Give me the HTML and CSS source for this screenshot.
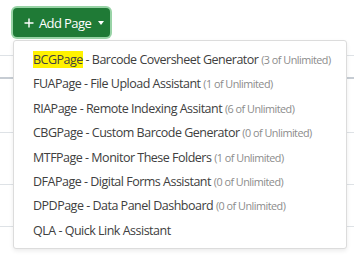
FILE: index.html
```html
<!DOCTYPE html>
<html>
<head>
  <title>Add Page</title>
  <link rel="stylesheet" href="styles.css">
</head>
<body>
  <div class="toolbar">
    <button class="addButton">
      <svg class="plus" width="10" height="10" viewBox="0 0 10 10">
        <path d="M5 0.5V9.5M0.5 5H9.5" stroke="#fff" stroke-width="1.4" fill="none"/>
      </svg>
      <span>Add Page</span>
      <span class="caret"></span>
    </button>
  </div>

  <div class="pageTable">
    <div class="headRow"></div>
    <div class="bodyRow tall"></div>
    <div class="bodyRow tall"></div>
    <div class="bodyRow"></div>
  </div>

  <div class="dropMenu">
    <div class="menuItem"><span class="mark">BCGPage</span> - Barcode Coversheet Generator <span class="count">(3 of Unlimited)</span></div>
    <div class="menuItem">FUAPage - File Upload Assistant <span class="count">(1 of Unlimited)</span></div>
    <div class="menuItem">RIAPage - Remote Indexing Assitant <span class="count">(6 of Unlimited)</span></div>
    <div class="menuItem">CBGPage - Custom Barcode Generator <span class="count">(0 of Unlimited)</span></div>
    <div class="menuItem">MTFPage - Monitor These Folders <span class="count">(1 of Unlimited)</span></div>
    <div class="menuItem">DFAPage - Digital Forms Assistant <span class="count">(0 of Unlimited)</span></div>
    <div class="menuItem">DPDPage - Data Panel Dashboard <span class="count">(0 of Unlimited)</span></div>
    <div class="menuItem">QLA - Quick Link Assistant</div>
  </div>
</body>
</html>
```

FILE: styles.css
```css
body {
  font-family: "Open Sans", "Noto Sans", sans-serif;
  background: #fff;
  margin: 0;
  position: relative;
  width: 354px;
  height: 256px;
  overflow: hidden;
}

.toolbar {
  padding: 8px 0 0 13px;
}

.addButton {
  display: flex;
  align-items: center;
  width: 97px;
  height: 29px;
  padding: 0 0 0 11px;
  border: none;
  border-radius: 4px;
  background-color: #1f7a36;
  color: #fff;
  font-family: "Open Sans", "Noto Sans", sans-serif;
  font-size: 13px;
  letter-spacing: -0.6px;
  white-space: nowrap;
  box-shadow: 0 0 0 2px #98d3a6;
}

.plus {
  margin-right: 5px;
}

.caret {
  width: 0;
  height: 0;
  margin-left: 7px;
  border-top: 4px solid #fff;
  border-left: 3px solid transparent;
  border-right: 3px solid transparent;
}

.pageTable {
  margin-top: 18px;
}

.headRow {
  height: 21px;
  border-top: 1px solid #dee2e6;
  border-bottom: 2px solid #c6ccd3;
}

.bodyRow {
  height: 41px;
  border-bottom: 1px solid #dee2e6;
}

.bodyRow.tall {
  height: 53px;
}

.bodyRow.tall + .bodyRow.tall {
  height: 51px;
}

.dropMenu {
  position: absolute;
  left: 13px;
  top: 40px;
  width: 332px;
  padding: 7px 0 5px;
  background: #fff;
  border: 1px solid #dcdcdc;
  border-radius: 3px;
  box-shadow: 0 2px 4px rgba(0, 0, 0, 0.08);
}

.menuItem {
  padding: 2px 0 2px 19px;
  line-height: 20.4px;
  font-size: 12.5px;
  letter-spacing: -0.5px;
  color: #404040;
  white-space: nowrap;
}

.mark {
  background-color: #fff200;
}

.count {
  font-size: 10.8px;
  letter-spacing: -0.5px;
  color: #8c8c8c;
}
```
